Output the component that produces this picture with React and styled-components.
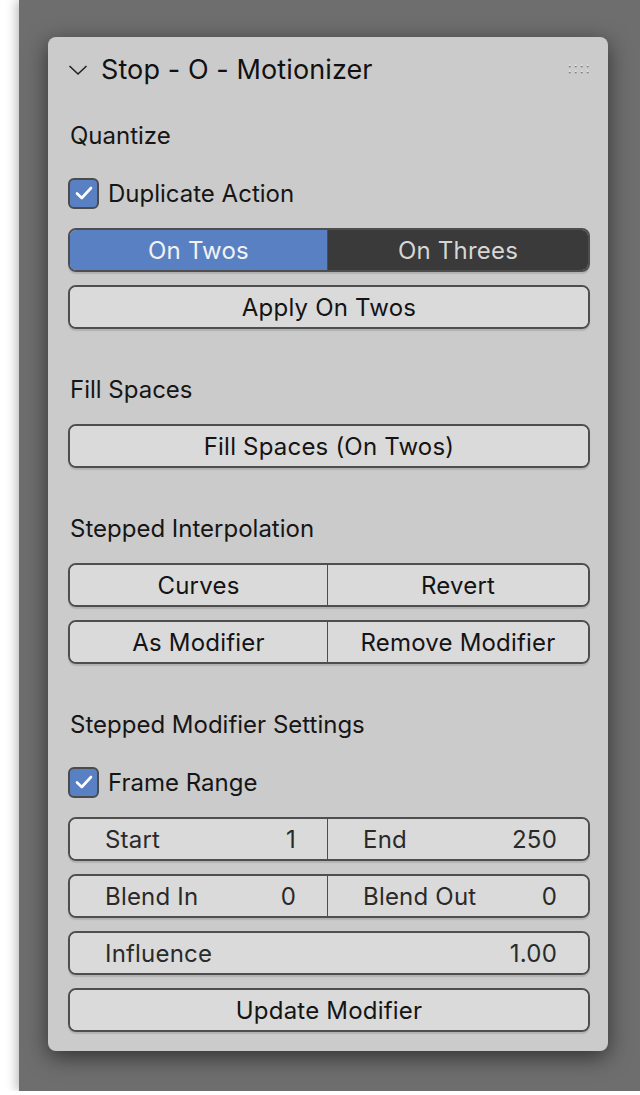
import React from 'react';
import { createGlobalStyle, styled } from 'styled-components';

const GlobalStyle = createGlobalStyle`
  html, body {
    margin: 0;
    background: #ffffff;
  }
  body {
    font-family: Inter, "Noto Sans", "Liberation Sans", sans-serif;
  }
`;

const Backdrop = styled.div`
  margin-left: 19px;
  height: 1091px;
  background: #6e6e6e;
  box-shadow: -3px 0 10px rgba(0, 0, 0, 0.25);
  padding: 37px 32px 0 29px;
  box-sizing: border-box;
`;

const Panel = styled.div`
  width: 560px;
  height: 1014px;
  box-sizing: border-box;
  background: #cbcbcb;
  border-radius: 8px;
  box-shadow: 0 6px 22px rgba(0, 0, 0, 0.55);
  padding: 0 18px 19px 20px;
  display: flex;
  flex-direction: column;
`;

const Header = styled.div`
  height: 64px;
  display: flex;
  align-items: center;
  gap: 13px;
  color: #111;
  font-size: 27px;
`;

const Chevron = styled.svg`
  width: 20px;
  height: 12px;
  margin-top: 2px;
`;

const Title = styled.span`
  flex: 1;
  letter-spacing: 0.1px;
`;

const Grip = styled.svg`
  width: 24px;
  height: 12px;
  margin-right: -2px;
`;

const Sections = styled.div`
  display: flex;
  flex-direction: column;
  gap: 44px;
  margin-top: 18px;
`;

const Section = styled.div`
  display: flex;
  flex-direction: column;
  gap: 13px;
`;

const Label = styled.div`
  height: 34px;
  line-height: 34px;
  margin-bottom: 4px;
  padding-left: 2px;
  font-size: 24px;
  color: #161616;
`;

const CheckRow = styled.label`
  height: 34px;
  margin: 6px 0 5px;
  display: flex;
  align-items: center;
  gap: 9px;
  font-size: 24px;
  color: #161616;
`;

const Box = styled.span`
  width: 27px;
  height: 27px;
  border-radius: 6px;
  background: #5a80c4;
  border: 2px solid #4b4b4b;
  display: flex;
  align-items: center;
  justify-content: center;
`;

const Group = styled.div`
  height: 44px;
  box-sizing: border-box;
  display: flex;
  border: 2px solid #4e4e4e;
  border-radius: 8px;
  overflow: hidden;
  box-shadow: 0 2px 1px rgba(0, 0, 0, 0.12);
`;

const Button = styled.div`
  flex: 1;
  display: flex;
  align-items: center;
  justify-content: center;
  font-size: 24px;
  letter-spacing: 0.2px;
  color: ${(p) => (p.$active ? '#f2f2f2' : p.$dark ? '#d6d6d6' : '#141414')};
  background: ${(p) => (p.$active ? '#5a80c4' : p.$dark ? '#3a3a3a' : '#dadada')};
  &:first-child:not(:last-child) {
    flex: 0 0 257px;
  }
  & + & {
    border-left: 1.5px solid #4e4e4e;
  }
`;

const Field = styled(Button)`
  justify-content: space-between;
  padding: 0 31px 0 35px;
  color: #2a2a2a;
  box-sizing: border-box;
`;

function Check() {
  return (
    <Box>
      <svg width="18" height="14" viewBox="0 0 18 14">
        <path d="M2 7.5 L6.8 12 L16 2" fill="none" stroke="#fff" strokeWidth="2.6" strokeLinecap="round" strokeLinejoin="round" />
      </svg>
    </Box>
  );
}

function App() {
  const dots = [];
  [0, 1, 2, 3].forEach((c) =>
    [0, 1].forEach((r) => {
      dots.push(<rect key={`a${c}${r}`} x={c * 7 + 1} y={r * 7 + 2} width="2" height="2" fill="#7d7d7d" />);
      dots.push(<rect key={`b${c}${r}`} x={c * 7 + 1} y={r * 7 + 1} width="2" height="1.2" fill="#f4f4f4" />);
    })
  );

  return (
    <>
      <GlobalStyle />
      <Backdrop>
        <Panel>
          <Header>
            <Chevron viewBox="0 0 20 12">
              <path d="M1.5 2 L10 10 L18.5 2" fill="none" stroke="#222" strokeWidth="1.6" />
            </Chevron>
            <Title>Stop - O - Motionizer</Title>
            <Grip viewBox="0 0 28 12">{dots}</Grip>
          </Header>
          <Sections>
            <Section>
              <Label>Quantize</Label>
              <CheckRow>
                <Check />
                Duplicate Action
              </CheckRow>
              <Group>
                <Button $active>On Twos</Button>
                <Button $dark>On Threes</Button>
              </Group>
              <Group>
                <Button>Apply On Twos</Button>
              </Group>
            </Section>
            <Section>
              <Label>Fill Spaces</Label>
              <Group>
                <Button>Fill Spaces (On Twos)</Button>
              </Group>
            </Section>
            <Section>
              <Label>Stepped Interpolation</Label>
              <Group>
                <Button>Curves</Button>
                <Button>Revert</Button>
              </Group>
              <Group>
                <Button>As Modifier</Button>
                <Button>Remove Modifier</Button>
              </Group>
            </Section>
            <Section>
              <Label>Stepped Modifier Settings</Label>
              <CheckRow>
                <Check />
                Frame Range
              </CheckRow>
              <Group>
                <Field>
                  <span>Start</span>
                  <span>1</span>
                </Field>
                <Field>
                  <span>End</span>
                  <span>250</span>
                </Field>
              </Group>
              <Group>
                <Field>
                  <span>Blend In</span>
                  <span>0</span>
                </Field>
                <Field>
                  <span>Blend Out</span>
                  <span>0</span>
                </Field>
              </Group>
              <Group>
                <Field>
                  <span>Influence</span>
                  <span>1.00</span>
                </Field>
              </Group>
              <Group>
                <Button>Update Modifier</Button>
              </Group>
            </Section>
          </Sections>
        </Panel>
      </Backdrop>
    </>
  );
}

export default App;
